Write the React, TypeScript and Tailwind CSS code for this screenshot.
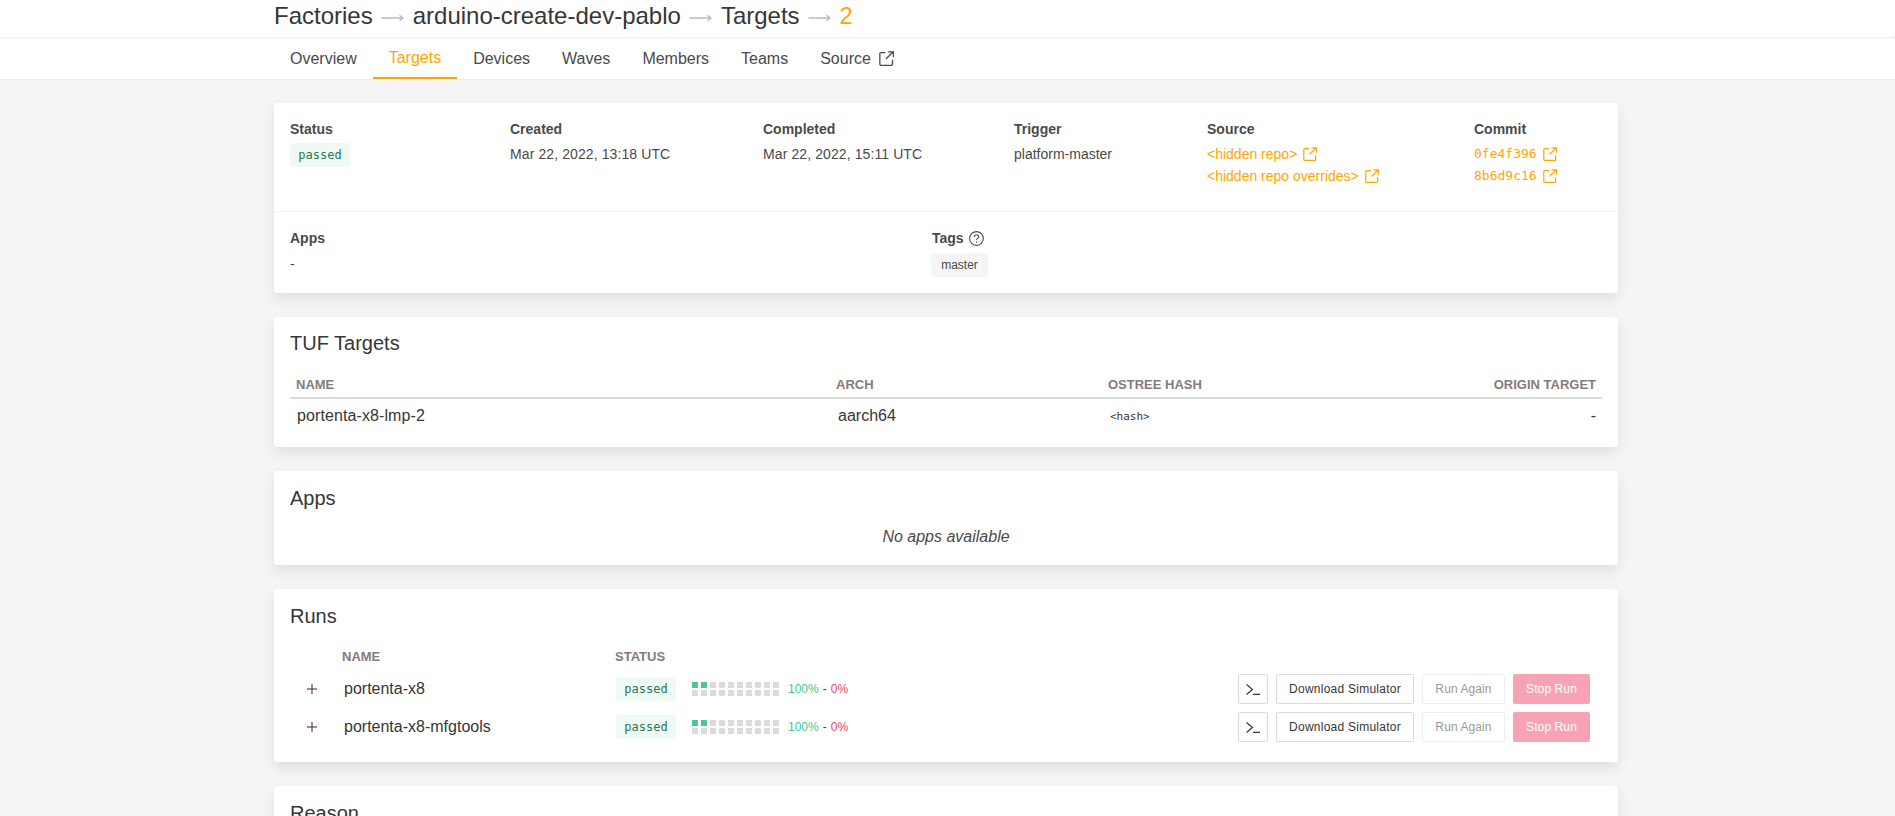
import React from 'react';

const ExternalIcon = ({ className = 'w-[14px] h-[14px]' }: { className?: string }) => (
  <svg viewBox="0 0 14 14" fill="none" stroke="currentColor" strokeWidth="1.2" className={className}>
    <path d="M6 1.6H1.8a1 1 0 0 0-1 1v9.8a1 1 0 0 0 1 1h9.8a1 1 0 0 0 1-1V8.2" />
    <path d="M6.5 7.5 13 1M8.5 .8h4.9v4.9" />
  </svg>
);

const Arrow = () => (
  <svg viewBox="0 0 24 10" fill="none" stroke="#bbbbbb" strokeWidth="1.3" className="w-[24px] h-[10px] mt-[3px] -ml-[1px] mr-[1px]">
    <path d="M1.5 5H23M19.5 2.2 23 5l-3.5 2.8" />
  </svg>
);

const Badge = () => (
  <span className="inline-flex items-center justify-center w-[60px] h-6 rounded-[3px] bg-[#effaf5] text-[#257953] text-[12px] font-['DejaVu_Sans_Mono',monospace]">passed</span>
);

const tabs = ['Overview', 'Targets', 'Devices', 'Waves', 'Members', 'Teams'];

const Th = ({ className = '', children }: { className?: string; children: React.ReactNode }) => (
  <div className={`text-[13px] font-bold text-[#857b7b] uppercase ${className}`}>{children}</div>
);

const Label = ({ children }: { children: React.ReactNode }) => (
  <div className="text-[14px] font-bold leading-[20px] text-[#4a4a4a]">{children}</div>
);

const Card = ({ className = '', children }: { className?: string; children: React.ReactNode }) => (
  <div className={`bg-white rounded-[3px] shadow-[0_6px_14px_rgba(0,0,0,0.09)] mb-[24px] ${className}`}>{children}</div>
);

const CardTitle = ({ children }: { children: React.ReactNode }) => (
  <h2 className="text-[20px] leading-[28px] text-[#363636]">{children}</h2>
);

const RunRow = ({ name }: { name: string }) => (
  <div className="flex items-center h-[38px] pl-[33px]">
    <span className="w-[37px] text-[#4a1c24]">
      <svg viewBox="0 0 10 10" className="w-[10px] h-[10px]" stroke="currentColor" strokeWidth="1"><path d="M5 0v10M0 5h10" /></svg>
    </span>
    <span className="w-[272px] text-[16px] text-[#363636]">{name}</span>
    <Badge />
    <div className="grid grid-cols-[repeat(10,6px)] gap-x-[3px] gap-y-[2px] ml-[16px]">
      {Array.from({ length: 20 }).map((_, i) => (
        <span key={i} className={`h-[6px] ${i < 2 ? 'bg-[#48c78e]' : 'bg-[#dbdbdb]'}`} />
      ))}
    </div>
    <span className="ml-[9px] text-[12px] text-[#48c78e]">100%</span>
    <span className="mx-[4px] text-[12px] text-[#4a4a4a]">-</span>
    <span className="text-[12px] text-[#f14668]">0%</span>
    <div className="ml-auto flex gap-[8px] text-[12px] pr-[28px]">
      <button className="w-[30px] h-[30px] border border-[#dbdbdb] rounded-[2px] flex items-center justify-center text-[#363636]">
        <svg viewBox="0 0 14 11" className="w-[14px] h-[11px]" fill="none" stroke="currentColor" strokeWidth="1.2"><path d="M.5 .5l6 5-6 5M7 10.4h7" /></svg>
      </button>
      <button className="w-[138px] h-[30px] border border-[#dbdbdb] rounded-[2px] text-[#363636] tracking-[0.25px]">Download Simulator</button>
      <button className="w-[83px] h-[30px] border border-[#eeeeee] rounded-[2px] text-[#999999] tracking-[0.1px]">Run Again</button>
      <button className="w-[77px] h-[30px] rounded-[2px] bg-[#f8a3b4] text-white tracking-[0.1px]">Stop Run</button>
    </div>
  </div>
);

export default function App() {
  return (
    <div className="h-[816px] overflow-hidden bg-[#f5f5f5] text-[#4a4a4a] font-['Liberation_Sans',Arial,sans-serif]">
      <div className="bg-white h-[38px] border-b border-dotted border-[#e4e4e4]">
        <div className="ml-[274px] flex items-center gap-[8px] h-[32px] text-[24px] text-[#363636]">
          <span>Factories</span>
          <Arrow />
          <span>arduino-create-dev-pablo</span>
          <Arrow />
          <span>Targets</span>
          <Arrow />
          <span className="text-[#ffa500]">2</span>
        </div>
      </div>
      <div className="bg-white h-[41px] shadow-[0_1px_1px_rgba(0,0,0,0.03)]">
        <div className="ml-[274px] flex text-[16px]">
          {tabs.map(tab => (
            <a key={tab} className={`h-[41px] px-[16px] flex items-center ${tab === 'Targets' ? 'text-[#ffa500] border-b-2 border-[#ffa500]' : ''}`}>{tab}</a>
          ))}
          <a className="h-[41px] px-[16px] flex items-center gap-[8px]">Source <ExternalIcon className="w-[15px] h-[15px]" /></a>
        </div>
      </div>

      <div className="ml-[274px] w-[1344px] pt-[24px]">
        <Card>
          <div className="h-[109px] pt-[16px] pl-[16px] grid grid-cols-[220px_253px_251px_193px_267px_1fr] border-b border-[#f3f3f3] text-[14px]">
            <div>
              <Label>Status</Label>
              <div className="mt-[4px]"><Badge /></div>
            </div>
            <div>
              <Label>Created</Label>
              <div className="mt-[4px] leading-[22px] tracking-[0.1px]">Mar 22, 2022, 13:18 UTC</div>
            </div>
            <div>
              <Label>Completed</Label>
              <div className="mt-[4px] leading-[22px] tracking-[0.1px]">Mar 22, 2022, 15:11 UTC</div>
            </div>
            <div>
              <Label>Trigger</Label>
              <div className="mt-[4px] leading-[22px]">platform-master</div>
            </div>
            <div>
              <Label>Source</Label>
              <div className="mt-[4px] leading-[22px] text-[#ffa500]">
                <div className="flex items-center gap-[6px]">&lt;hidden repo&gt; <ExternalIcon /></div>
                <div className="flex items-center gap-[6px]">&lt;hidden repo overrides&gt; <ExternalIcon /></div>
              </div>
            </div>
            <div>
              <Label>Commit</Label>
              <div className="mt-[4px] leading-[22px] text-[#ffa500] text-[13px] font-['DejaVu_Sans_Mono',monospace]">
                <div className="flex items-center gap-[6px]">0fe4f396 <ExternalIcon /></div>
                <div className="flex items-center gap-[6px]">8b6d9c16 <ExternalIcon /></div>
              </div>
            </div>
          </div>
          <div className="h-[81px] pt-[16px] pl-[16px] grid grid-cols-[642px_1fr] text-[14px]">
            <div>
              <Label>Apps</Label>
              <div className="mt-[5px] leading-[22px]">-</div>
            </div>
            <div>
              <div className="flex items-center gap-[5px]">
                <Label>Tags</Label>
                <svg viewBox="0 0 14 14" className="w-[15px] h-[15px] text-[#4a4a4a]" fill="none" stroke="currentColor" strokeWidth="1">
                  <circle cx="7" cy="7" r="6.4" />
                  <path d="M5 5.5c0-2.6 4-2.6 4 0 0 1.5-2 1.6-2 3M7 9.8v1.2" />
                </svg>
              </div>
              <span className="inline-flex items-center justify-center w-[57px] h-6 mt-[5px] -ml-[1px] rounded-[3px] bg-[#f5f5f5] text-[12px]">master</span>
            </div>
          </div>
        </Card>

        <Card className="h-[130px] px-[16px] pt-[12px]">
          <CardTitle>TUF Targets</CardTitle>
          <div className="grid grid-cols-[540px_272px_1fr_200px] h-[34px] items-end pb-[3px] mt-[8px] px-[6px] border-b-2 border-[#dbdbdb]">
            <Th>Name</Th>
            <Th>Arch</Th>
            <Th>Ostree Hash</Th>
            <Th className="text-right">Origin Target</Th>
          </div>
          <div className="grid grid-cols-[540px_272px_1fr_200px] h-[33px] items-center px-[6px] text-[16px] text-[#363636]">
            <div className="pl-[1px] tracking-[0.1px]">portenta-x8-lmp-2</div>
            <div className="pl-[2px]">aarch64</div>
            <div className="pl-[2px] mt-[3px] text-[11px] font-['DejaVu_Sans_Mono',monospace]">&lt;hash&gt;</div>
            <div className="text-right">-</div>
          </div>
        </Card>

        <Card className="h-[94px] px-[16px] pt-[13px]">
          <CardTitle>Apps</CardTitle>
          <div className="mt-[13px] text-center italic text-[16px]">No apps available</div>
        </Card>

        <Card className="h-[173px] px-[16px] pt-[13px]">
          <CardTitle>Runs</CardTitle>
          <div className="flex items-center h-[24px] mt-[15px] pl-[52px]">
            <Th className="w-[273px]">Name</Th>
            <Th>Status</Th>
          </div>
          <div className="-ml-[16px] -mr-[16px] mt-[1px]">
            <RunRow name="portenta-x8" />
            <RunRow name="portenta-x8-mfgtools" />
          </div>
        </Card>

        <Card className="h-[200px] px-[16px] pt-[13px]">
          <CardTitle>Reason</CardTitle>
        </Card>
      </div>
    </div>
  );
}
